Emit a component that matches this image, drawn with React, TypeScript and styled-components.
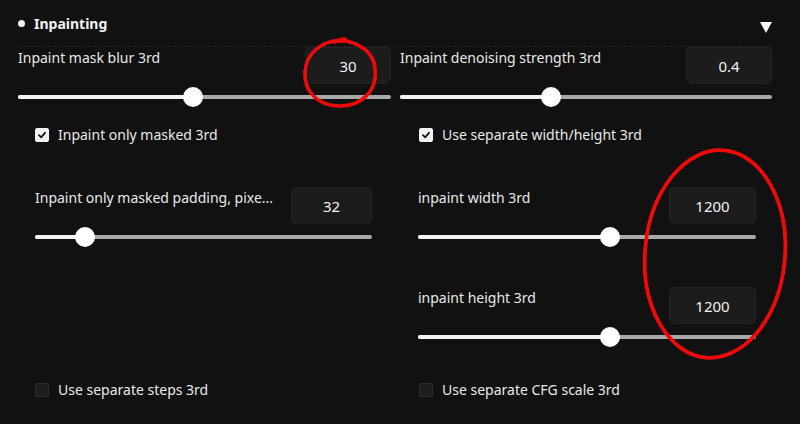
import React from 'react';
import styled, { createGlobalStyle } from 'styled-components';

const GlobalStyle = createGlobalStyle`
  html, body {
    margin: 0;
    padding: 0;
    background: #111111;
  }
  body {
    font-family: 'Noto Sans', 'Liberation Sans', sans-serif;
    color: #e8e8e8;
  }
`;

const Page = styled.div`
  position: relative;
  width: 800px;
  height: 424px;
  box-sizing: border-box;
  padding: 12px 28px 0 18px;
  background: #111111;
  overflow: hidden;
`;

const Header = styled.div`
  display: flex;
  align-items: center;
  justify-content: space-between;
  height: 22px;
  padding-bottom: 12px;
  border-bottom: 1px dashed #262626;
`;

const Title = styled.div`
  display: flex;
  align-items: center;
  gap: 9px;
  font-size: 14px;
  font-weight: 700;
  color: #f2f2f2;
`;

const Dot = styled.span`
  width: 7px;
  height: 7px;
  border-radius: 50%;
  background: #f2f2f2;
`;

const Caret = styled.span`
  width: 0;
  height: 0;
  margin-top: 9px;
  border-left: 6px solid transparent;
  border-right: 6px solid transparent;
  border-top: 11px solid #f5f5f5;
`;

const Columns = styled.div`
  display: grid;
  grid-template-columns: 373px 372px;
  grid-template-rows: auto auto auto auto;
  column-gap: 9px;
`;

const SliderBlock = styled.div<{ $inset?: string }>`
  display: flex;
  flex-direction: column;
  padding: ${p => p.$inset ?? '0'};
`;

const SliderHead = styled.div`
  display: flex;
  align-items: flex-start;
  justify-content: space-between;
`;

const Label = styled.span`
  font-size: 14px;
  line-height: 22px;
  color: #e8e8e8;
  white-space: nowrap;
`;

const NumberBox = styled.div<{ $w: number }>`
  width: ${p => p.$w}px;
  height: 37px;
  box-sizing: border-box;
  display: flex;
  align-items: center;
  justify-content: center;
  background: #1c1c1c;
  border: 1px solid #232323;
  border-radius: 5px;
  font-size: 15px;
  color: #f0f0f0;
`;

const Track = styled.div`
  position: relative;
  height: 20px;
  margin-top: 3px;
  display: flex;
  align-items: center;
`;

const Rail = styled.div`
  position: relative;
  width: 100%;
  height: 4px;
  border-radius: 2px;
  background: #a9a9a9;
`;

const Fill = styled.div`
  position: absolute;
  left: 0;
  top: 0;
  bottom: 0;
  border-radius: 2px;
  background: #f4f4f4;
`;

const Thumb = styled.div`
  position: absolute;
  top: 0;
  width: 20px;
  height: 20px;
  margin-left: -10px;
  border-radius: 50%;
  background: #ffffff;
`;

const CheckRow = styled.div<{ $top: number; $indent: number }>`
  display: flex;
  align-items: center;
  gap: 9px;
  height: 20px;
  margin-top: ${p => p.$top}px;
  padding-left: ${p => p.$indent}px;
`;

const Box = styled.span<{ $checked?: boolean }>`
  width: 14px;
  height: 14px;
  box-sizing: border-box;
  border-radius: 2px;
  display: flex;
  align-items: center;
  justify-content: center;
  background: ${p => (p.$checked ? '#f2f2f2' : '#1e1e1e')};
  border: 1px solid ${p => (p.$checked ? '#f2f2f2' : '#2c2c2c')};
`;

const Stack = styled.div<{ $top: number }>`
  display: flex;
  flex-direction: column;
  gap: 40px;
  padding-top: ${p => p.$top}px;
`;

const Overlay = styled.svg`
  position: absolute;
  left: 0;
  top: 0;
  pointer-events: none;
`;

const Slider = ({ value, min, max }: { value: number; min: number; max: number }) => {
  const frac = (value - min) / (max - min);
  const pos = `calc(10px + (100% - 20px) * ${frac})`;
  return (
    <Track>
      <Rail>
        <Fill style={{ width: pos }} />
      </Rail>
      <Thumb style={{ left: pos }} />
    </Track>
  );
};

const SliderField = ({
  label,
  value,
  min,
  max,
  boxW = 86,
  inset,
}: {
  label: string;
  value: number;
  min: number;
  max: number;
  boxW?: number;
  inset?: string;
}) => (
  <SliderBlock $inset={inset}>
    <SliderHead>
      <Label>{label}</Label>
      <NumberBox $w={boxW}>{value}</NumberBox>
    </SliderHead>
    <Slider value={value} min={min} max={max} />
  </SliderBlock>
);

const Check = ({ label, checked, top, indent }: { label: string; checked?: boolean; top: number; indent: number }) => (
  <CheckRow $top={top} $indent={indent}>
    <Box $checked={checked}>
      {checked && (
        <svg width="10" height="10" viewBox="0 0 10 10">
          <path d="M2 5.2 L4.2 7.3 L8 2.8" fill="none" stroke="#111" strokeWidth="1.8" strokeLinecap="round" strokeLinejoin="round" />
        </svg>
      )}
    </Box>
    <Label>{label}</Label>
  </CheckRow>
);

export default function App() {
  return (
    <>
      <GlobalStyle />
      <Page>
        <Header>
          <Title>
            <Dot />
            Inpainting
          </Title>
          <Caret />
        </Header>
        <Columns>
          <SliderField label="Inpaint mask blur 3rd" value={30} min={0} max={64} />
          <SliderField label="Inpaint denoising strength 3rd" value={0.4} min={0} max={1} />

          <Check label="Inpaint only masked 3rd" checked top={18} indent={17} />
          <Check label="Use separate width/height 3rd" checked top={18} indent={19} />

          <Stack $top={42}>
            <SliderField label="Inpaint only masked padding, pixe..." value={32} min={0} max={256} boxW={81} inset="0 19px 0 17px" />
          </Stack>
          <Stack $top={42}>
            <SliderField label="inpaint width 3rd" value={1200} min={64} max={2048} boxW={87} inset="0 16px 0 18px" />
            <SliderField label="inpaint height 3rd" value={1200} min={64} max={2048} boxW={87} inset="0 16px 0 18px" />
          </Stack>

          <Check label="Use separate steps 3rd" top={33} indent={17} />
          <Check label="Use separate CFG scale 3rd" top={33} indent={19} />
        </Columns>
        <Overlay width="800" height="424" viewBox="0 0 800 424">
          <path
            d="M334 42 C350 38 373 48 375 68 C378 92 360 107 338 106 C316 105 304 90 305 72 C306 54 320 42 340 40 C343 39 345 38 347 41"
            fill="none"
            stroke="#ee0a0a"
            strokeWidth="3.6"
            strokeLinecap="round"
          />
          <ellipse cx="715" cy="254" rx="70" ry="104" transform="rotate(5 715 254)" fill="none" stroke="#ee0a0a" strokeWidth="3.8" />
        </Overlay>
      </Page>
    </>
  );
}
